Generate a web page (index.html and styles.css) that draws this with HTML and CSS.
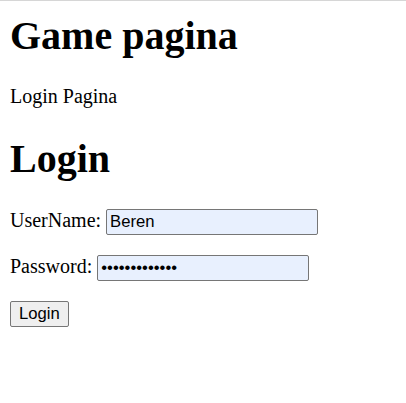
FILE: index.html
```html
<!DOCTYPE html>
<html lang="nl">
<head>
<meta charset="utf-8">
<title>Game pagina</title>
<link rel="stylesheet" href="styles.css">
</head>
<body>
<h1 class="title title-first">Game pagina</h1>
<p class="text">Login Pagina</p>
<h1 class="title">Login</h1>
<form class="form">
  <p class="row"><label class="label" for="u">UserName:</label> <input class="field" id="u" type="text" value="Beren"></p>
  <p class="row"><label class="label" for="pw">Password:</label> <input class="field" id="pw" type="password" value="bbbbbbbbbbbbb"></p>
  <p class="row"><button class="btn" type="button">Login</button></p>
</form>
</body>
</html>
```
FILE: styles.css
```css
html {
  background: #fff;
}
body {
  margin: 0 10px 10px;
  font-family: "Liberation Serif", "Times New Roman", serif;
  font-size: 20px;
  color: #000;
}
body::before {
  content: "";
  position: fixed;
  top: 0;
  left: 0;
  right: 0;
  height: 1px;
  background: #d6d6d6;
}
.title {
  font-size: 40px;
  font-weight: bold;
  margin: 26.8px 0;
}
.title-first {
  margin-top: 0;
  padding-top: 11.6px;
}
.text {
  margin: 20px 0;
}
.form {
  margin: 0;
}
.row {
  margin: 20px 0;
}
.field {
  box-sizing: border-box;
  width: 212px;
  height: 26px;
  padding: 1px 3px;
  font-family: "Liberation Sans", Arial, sans-serif;
  font-size: 16.67px;
  color: #000;
  background: #e8f0fe;
  border: 1px solid #767676;
  border-radius: 2px;
  vertical-align: baseline;
}
.btn {
  box-sizing: border-box;
  height: 26px;
  padding: 1px 8px;
  font-family: "Liberation Sans", Arial, sans-serif;
  font-size: 16.67px;
  color: #000;
  background: #efefef;
  border: 1px solid #767676;
  border-radius: 2px;
}
```
